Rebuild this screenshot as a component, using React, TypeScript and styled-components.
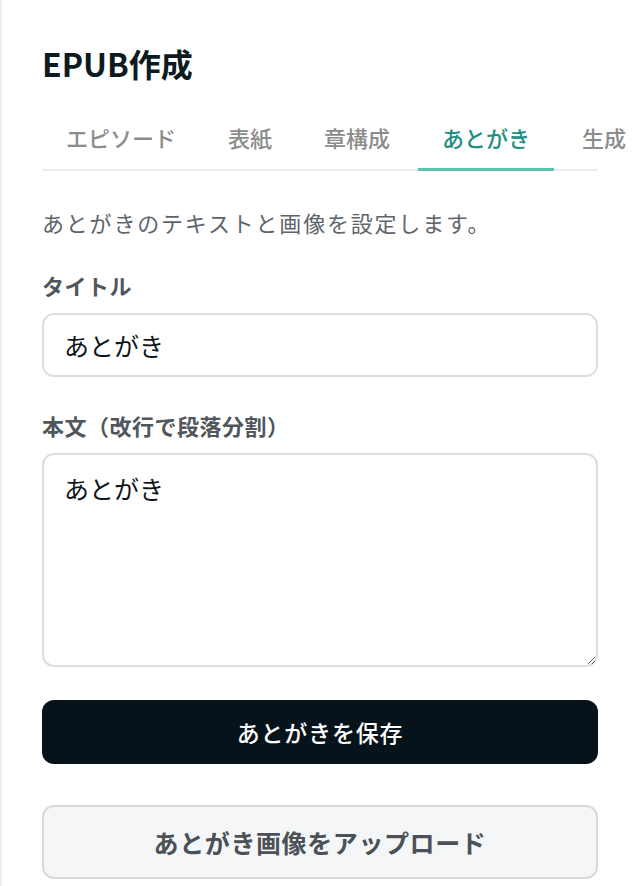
import { useState } from "react";
import styled, { createGlobalStyle } from "styled-components";

const GlobalStyle = createGlobalStyle`
  html, body {
    margin: 0;
    padding: 0;
    background: #ffffff;
    overflow: hidden;
  }

  body {
    font-family: "Noto Sans CJK JP", "Noto Sans", sans-serif;
  }

  * {
    box-sizing: border-box;
  }
`;

const TABS = ["エピソード", "表紙", "章構成", "あとがき", "生成"];

const Panel = styled.div`
  min-height: 886px;
  padding: 43px 38px 0 40px;
  border-left: 2px solid #ececec;
`;

const Heading = styled.h1`
  margin: 0;
  font-size: 32px;
  line-height: 40px;
  font-weight: 700;
  color: #0c1a22;
`;

const TabBar = styled.div`
  display: flex;
  gap: 4px;
  margin-top: 26px;
  border-bottom: 2px solid #ededed;
`;

const Tab = styled.button<{ $active: boolean }>`
  flex-shrink: 0;
  margin-bottom: -2px;
  padding: 12px 24px 15px;
  border: none;
  border-bottom: 3px solid ${({ $active }) => ($active ? "#5cc3ae" : "transparent")};
  background: transparent;
  font-family: inherit;
  font-size: 22px;
  line-height: 32px;
  font-weight: 500;
  color: ${({ $active }) => ($active ? "#1e8f80" : "#8c8c8c")};
  cursor: pointer;
`;

const Description = styled.p`
  margin: 35px 0 0;
  font-size: 22px;
  line-height: 32px;
  letter-spacing: 1.8px;
  color: #5e656a;
`;

const Form = styled.div`
  display: flex;
  flex-direction: column;
  gap: 32px;
  margin-top: 31px;
`;

const Field = styled.label`
  display: flex;
  flex-direction: column;
  gap: 12px;
`;

const FieldLabel = styled.span`
  font-size: 22px;
  line-height: 32px;
  font-weight: 700;
  letter-spacing: 0.5px;
  color: #50575c;
`;

const TextInput = styled.input`
  height: 64px;
  padding: 0 20px;
  border: 2px solid #dedede;
  border-radius: 12px;
  font-family: inherit;
  font-size: 25px;
  color: #111518;
  outline: none;
`;

const TextArea = styled.textarea`
  height: 214px;
  padding: 14px 20px;
  border: 2px solid #dedede;
  border-radius: 12px;
  font-family: inherit;
  font-size: 25px;
  line-height: 38px;
  color: #111518;
  outline: none;
  resize: vertical;
`;

const Actions = styled.div`
  display: flex;
  flex-direction: column;
  gap: 41px;
  margin-top: 33px;
`;

const SaveButton = styled.button`
  height: 64px;
  border: none;
  border-radius: 12px;
  background: #07131a;
  font-family: inherit;
  font-size: 23px;
  font-weight: 500;
  color: #ffffff;
  letter-spacing: 0.8px;
  cursor: pointer;
`;

const UploadButton = styled.button`
  height: 74px;
  border: 2px solid #d9d9d9;
  border-radius: 12px;
  background: #f5f6f8;
  font-family: inherit;
  font-size: 25px;
  font-weight: 700;
  letter-spacing: 0.6px;
  color: #4b5156;
  cursor: pointer;
`;

export default function App() {
  const [active, setActive] = useState("あとがき");
  const [title, setTitle] = useState("あとがき");
  const [body, setBody] = useState("あとがき");

  return (
    <>
      <GlobalStyle />
      <Panel>
        <Heading>EPUB作成</Heading>
        <TabBar>
          {TABS.map((tab) => (
            <Tab key={tab} $active={tab === active} onClick={() => setActive(tab)}>
              {tab}
            </Tab>
          ))}
        </TabBar>
        <Description>あとがきのテキストと画像を設定します。</Description>
        <Form>
          <Field>
            <FieldLabel>タイトル</FieldLabel>
            <TextInput value={title} onChange={(e) => setTitle(e.target.value)} />
          </Field>
          <Field>
            <FieldLabel>本文（改行で段落分割）</FieldLabel>
            <TextArea value={body} onChange={(e) => setBody(e.target.value)} />
          </Field>
        </Form>
        <Actions>
          <SaveButton>あとがきを保存</SaveButton>
          <UploadButton>あとがき画像をアップロード</UploadButton>
        </Actions>
      </Panel>
    </>
  );
}
